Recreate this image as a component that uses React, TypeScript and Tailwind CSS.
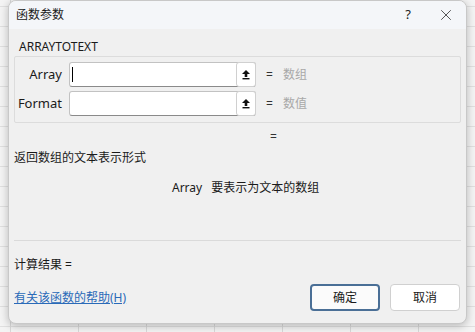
import { X } from "lucide-react";

const font = "font-['Segoe_UI','Noto_Sans','Noto_Sans_CJK_SC',sans-serif]";

function PickIcon() {
  return (
    <svg width="10" height="11" viewBox="0 0 10 11">
      <path d="M5 1 L9 5 H6.3 V8 H3.7 V5 H1 Z" fill="#111" />
      <rect x="1.5" y="9" width="7" height="1.4" fill="#111" />
    </svg>
  );
}

function ArgRow({ label, hint, focused }: { label: string; hint: string; focused?: boolean }) {
  return (
    <div className="flex items-center h-[25px]">
      <div className="w-[47px] text-right text-[13px] text-[#1a1a1a]">{label}</div>
      <div className="ml-[7px] w-[187px] h-[25px] flex border border-[#c2c2c2] border-b-[#8a8a8a] rounded-[3px] bg-white">
        <div className="flex-1 flex items-center pl-[2px]">
          {focused && <div className="w-px h-[15px] bg-black" />}
        </div>
        <div className="w-[20px] -my-px -mr-px flex items-center justify-center border border-[#d0d0d0] rounded-[3px] bg-white">
          <PickIcon />
        </div>
      </div>
      <span className="ml-[10px] text-[12px] text-[#333]">=</span>
      <span className="ml-[10px] text-[12px] text-[#a8a8a8]">{hint}</span>
    </div>
  );
}

export default function App() {
  return (
    <div
      className={`w-[475px] h-[332px] overflow-hidden bg-[#f4f4f4] bg-[linear-gradient(to_right,#d9d9d9_1px,transparent_1px),linear-gradient(to_bottom,#e0e0e0_1px,transparent_1px)] bg-[size:68px_20px] bg-[position:10px_6px] ${font}`}
    >
      <div className="ml-[8px] w-[459px] h-[324px] flex flex-col bg-[#f0f0f0] rounded-b-[8px] rounded-t-[8px] border border-[#c8c8c8] shadow-[0_2px_8px_rgba(0,0,0,0.25)] overflow-hidden">
        {/* title bar */}
        <div className="h-[28px] shrink-0 flex items-center pl-[7px] bg-[#f4f6f9]">
          <span className="text-[12px] text-[#1a1a1a]">函数参数</span>
          <span className="ml-auto text-[13px] text-[#222]">?</span>
          <X className="ml-[26px] mr-[11px] text-[#333]" size={18} strokeWidth={1.1} />
        </div>

        <div className="flex-1 flex flex-col px-[5px]">
          <div className="mt-[10px] pl-[5px] text-[12px] leading-[15px] text-[#1a1a1a]">ARRAYTOTEXT</div>
          <div className="mt-[2px] h-[67px] border border-[#dcdcdc] rounded-[2px] flex flex-col gap-[4px] pt-[5px]">
            <ArgRow label="Array" hint="数组" focused />
            <ArgRow label="Format" hint="数值" />
          </div>

          <div className="mt-[5px] pl-[256px] text-[12px] text-[#333]">=</div>
          <div className="mt-[3px] text-[12px] text-[#1a1a1a]">返回数组的文本表示形式</div>
          <div className="mt-[12px] pl-[158px] text-[12px] text-[#1a1a1a]">
            Array<span className="ml-[9px]">要表示为文本的数组</span>
          </div>

          <div className="mt-[43px] h-px bg-[#dadada]" />
          <div className="mt-[15px] text-[12px] text-[#1a1a1a]">计算结果 =</div>

          <div className="mt-[10px] flex items-center">
            <span className="text-[12px] text-[#2a6ab8] underline">有关该函数的帮助(H)</span>
            <button className="ml-auto w-[70px] h-[27px] rounded-[4px] bg-[#fbfbfb] border-2 border-[#4a6f96] text-[12px] text-[#1a1a1a]">
              确定
            </button>
            <button className="ml-[10px] mr-[1px] w-[70px] h-[27px] rounded-[4px] bg-white border border-[#d0d0d0] text-[12px] text-[#1a1a1a]">
              取消
            </button>
          </div>
        </div>
      </div>
    </div>
  );
}
